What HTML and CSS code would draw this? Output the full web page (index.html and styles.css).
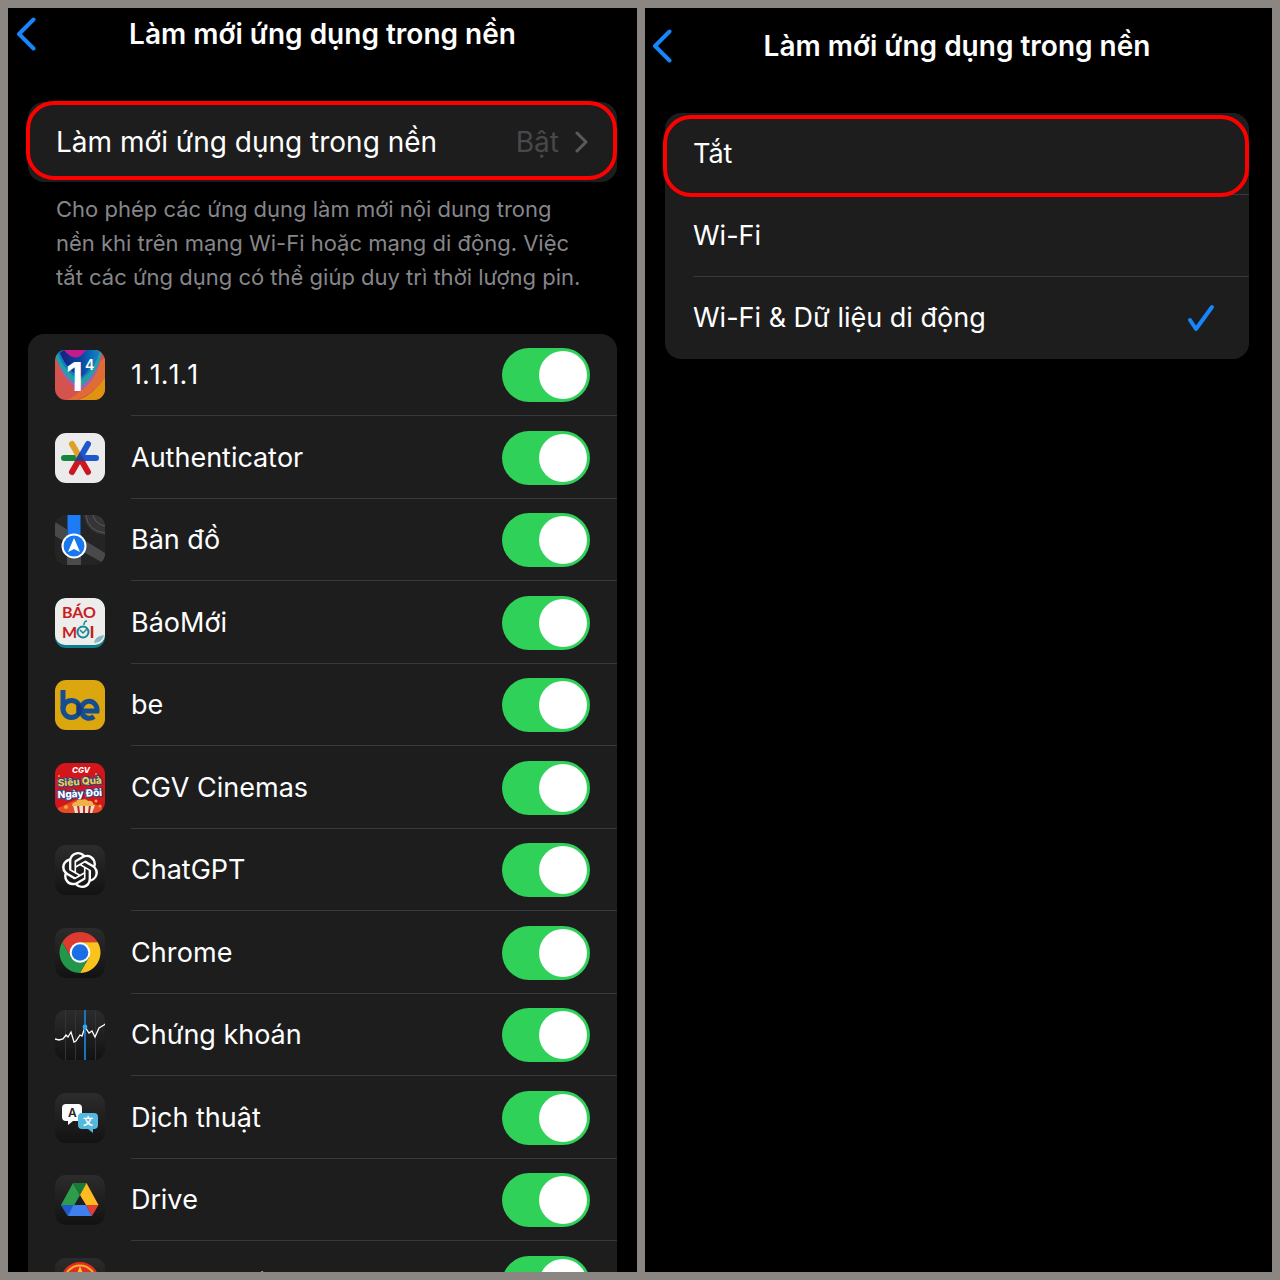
FILE: index.html
```html
<!DOCTYPE html>
<html lang="vi">
<head>
<meta charset="utf-8">
<meta name="viewport" content="width=device-width, initial-scale=1">
<title>Làm mới ứng dụng trong nền</title>
<link rel="stylesheet" href="styles.css">
</head>
<body>
<main class="screens">
  <section class="screen">
    <header class="navbar">
      <a class="back" href="#" aria-label="Quay lại"><svg width="20" height="34" viewBox="0 0 20 34"><path d="M17.500 2.500 3 17l14.500 14.500"/></svg></a>
      <h1 class="title">Làm mới ứng dụng trong nền</h1>
    </header>
    <a class="card setting" href="#">
      <span class="setting-name">Làm mới ứng dụng trong nền</span>
      <span class="setting-value">Bật</span>
      <svg class="chevron" width="14" height="22" viewBox="0 0 14 22"><path d="M2 2l9 9-9 9"/></svg>
      <span class="highlight"></span>
    </a>
    <p class="note">Cho phép các ứng dụng làm mới nội dung trong nền khi trên mạng Wi-Fi hoặc mạng di động. Việc tắt các ứng dụng có thể giúp duy trì thời lượng pin.</p>
    <ul class="card apps">
      <li><label class="app">
        <svg class="icon" viewBox="0 0 50 50">
          <defs><linearGradient id="warp" x1="0" y1="0" x2="1" y2="0"><stop offset="0" stop-color="#15207c"/><stop offset=".6" stop-color="#0b46a4"/><stop offset="1" stop-color="#087fc0"/></linearGradient></defs>
          <rect width="50" height="50" fill="#d5534f"/>
          <path d="M50 0v27Q38 45 24 50h26z" fill="#e0930f"/>
          <path d="M50 8v20Q40 42 22 50H12Q36 38 44 12z" fill="#df6b35"/>
          <path d="M0 5Q10 36 27 40 45 26 47 0H0z" fill="#9b62b4"/>
          <path d="M0 0v6Q10 30 26 36 43 24 47 0z" fill="#1ba3a5"/>
          <path d="M2 2Q12 26 26 30 40 20 45 0H2z" fill="#1679bd"/>
          <path d="M5 3Q13 22 26 27 37 20 41 0H8z" fill="url(#warp)"/>
          <path d="M9 0q12 15 22 0z" fill="#c41b8c"/>
          <text x="11" y="41" class="glyph" font-size="40" font-weight="700" fill="#fff">1</text>
          <text x="30" y="20" class="glyph" font-size="14" font-weight="600" fill="#fff">4</text>
        </svg>
        <span class="app-name">1.1.1.1</span><input class="switch" type="checkbox" checked></label></li>
      <li><label class="app">
        <svg class="icon" viewBox="0 0 50 50">
          <rect width="50" height="50" fill="#ebebeb"/>
          <g fill="none" stroke-width="6" stroke-linecap="round"><path d="M9 25h16" stroke="#16853a"/><path d="M17 11l8 14" stroke="#dda126"/><path d="M17 39l8-14 8 14" stroke="#cf1620"/><path d="M33 11l-8 14h16" stroke="#1d57d0"/></g>
          <path d="M25 20l5 8h-10z" fill="#29408f"/>
        </svg>
        <span class="app-name">Authenticator</span><input class="switch" type="checkbox" checked></label></li>
      <li><label class="app">
        <svg class="icon" viewBox="0 0 50 50">
          <rect width="50" height="50" fill="#242425"/>
          <path d="M0 7l50 31v11L0 21z" fill="#49494b"/>
          <path d="M29 0h21v20Q31 18 29 0z" fill="#353537"/>
          <path d="M31 0q2 16 19 18M38 0q2 9 12 11" stroke="#59595b" fill="none"/>
          <path d="M12 28h14v22H12z" fill="#4b4b4d"/>
          <path d="M13 0h12v25H13z" fill="#1b7cf5"/><path d="M12 0h1v25h-1zM25 0h1v25h-1z" fill="#175198"/>
          <circle cx="19" cy="31" r="12.500" fill="#fff"/><circle cx="19" cy="31" r="10.500" fill="#1a78ef"/>
          <path d="M19 23l6 14-6-3-6 3z" fill="#fff"/>
        </svg>
        <span class="app-name">Bản đồ</span><input class="switch" type="checkbox" checked></label></li>
      <li><label class="app">
        <svg class="icon" viewBox="0 0 50 50">
          <rect width="50" height="50" fill="#0f7d8c"/><rect width="50" height="47" rx="10" fill="#ededec"/>
          <text x="7" y="20" class="narrow" font-size="16" font-weight="700" fill="#c8201f">BÁO</text>
          <text x="7" y="40" class="narrow" font-size="16" font-weight="700" fill="#c8201f">M</text>
          <circle cx="28" cy="34" r="5.500" fill="none" stroke="#168796" stroke-width="2"/><path d="M25 32l3 3 4-4M29 27q0-4 3-4" fill="none" stroke="#168796" stroke-width="1.500"/>
          <path d="M37 28v12" stroke="#c8201f" stroke-width="2.500"/>
          <path d="M39 45q1-7 10-8-1 7-10 8z" fill="#86b9bd"/>
        </svg>
        <span class="app-name">BáoMới</span><input class="switch" type="checkbox" checked></label></li>
      <li><label class="app">
        <svg class="icon" viewBox="0 0 50 50">
          <rect width="50" height="50" fill="#dba60e"/>
          <g fill="none" stroke="#154c92" stroke-width="5"><path d="M8 10v19"/><circle cx="16.500" cy="29" r="8.500"/><path d="M27 31h15a8 8.500 0 1 0-3 5.500"/></g>
          <path d="M22 22q5 3 5 8t-4 6q-3-4-1-14z" fill="#123b78"/>
        </svg>
        <span class="app-name">be</span><input class="switch" type="checkbox" checked></label></li>
      <li><label class="app">
        <svg class="icon" viewBox="0 0 50 50">
          <rect width="50" height="50" fill="#d3161b"/>
          <path d="M25 35L3 45v5h44v-6z" fill="#e64b24"/>
          <text x="17" y="10" class="glyph" font-size="8" font-weight="800" font-style="italic" fill="#fff">CGV</text>
          <g class="glyph" font-weight="800" text-anchor="middle" stroke="#26478e" stroke-width="2" paint-order="stroke"><text x="25" y="22" font-size="10" fill="#f2cb47" transform="rotate(-4 25 22)">Siêu Quà</text><text x="25" y="34" font-size="10" fill="#fff" transform="rotate(-3 25 34)">Ngày Đôi</text></g>
          <path d="M18 42h22l-3 8H20z" fill="#f0ddd0"/><path d="M22 42l1 8h2l-1-8zM28 42v8h2v-8zM34 42l-1 8h2l1-8z" fill="#b72a20"/>
          <path d="M17 43q0-4 4-4 2-4 6-2 4-2 6 1 5-1 6 5z" fill="#efb347"/>
          <g fill="#f0a33c"><circle cx="11" cy="44" r="2"/><circle cx="41" cy="38" r="1.500"/><circle cx="45" cy="43" r="1.500"/><circle cx="4" cy="13" r="1"/><circle cx="41" cy="11" r="1"/></g>
        </svg>
        <span class="app-name">CGV Cinemas</span><input class="switch" type="checkbox" checked></label></li>
      <li><label class="app">
        <svg class="icon dark" viewBox="0 0 50 50">
          <path transform="translate(7 7) scale(1.500)" fill="#fff" d="M22.2819 9.8211a5.9847 5.9847 0 0 0-.5157-4.9108 6.0462 6.0462 0 0 0-6.5098-2.9A6.0651 6.0651 0 0 0 4.9807 4.1818a5.9847 5.9847 0 0 0-3.9977 2.9 6.0462 6.0462 0 0 0 .7427 7.0966 5.98 5.98 0 0 0 .511 4.9107 6.051 6.051 0 0 0 6.5146 2.9001A5.9847 5.9847 0 0 0 13.2599 24a6.0557 6.0557 0 0 0 5.7718-4.2058 5.9894 5.9894 0 0 0 3.9977-2.9001 6.0557 6.0557 0 0 0-.7475-7.0729zm-9.022 12.6081a4.4755 4.4755 0 0 1-2.8764-1.0408l.1419-.0804 4.7783-2.7582a.7948.7948 0 0 0 .3927-.6813v-6.7369l2.02 1.1686a.071.071 0 0 1 .038.052v5.5826a4.504 4.504 0 0 1-4.4945 4.4944zm-9.6607-4.1254a4.4708 4.4708 0 0 1-.5346-3.0137l.142.0852 4.783 2.7582a.7712.7712 0 0 0 .7806 0l5.8428-3.3685v2.3324a.0804.0804 0 0 1-.0332.0615L9.74 19.9502a4.4992 4.4992 0 0 1-6.1408-1.6464zM2.3408 7.8956a4.485 4.485 0 0 1 2.3655-1.9728V11.6a.7664.7664 0 0 0 .3879.6765l5.8144 3.3543-2.0201 1.1685a.0757.0757 0 0 1-.071 0l-4.8303-2.7865A4.504 4.504 0 0 1 2.3408 7.872zm16.5963 3.8558L13.1038 8.364 15.1192 7.2a.0757.0757 0 0 1 .071 0l4.8303 2.7913a4.4944 4.4944 0 0 1-.6765 8.1042v-5.6772a.79.79 0 0 0-.407-.667zm2.0107-3.0231l-.142-.0852-4.7735-2.7818a.7759.7759 0 0 0-.7854 0L9.409 9.2297V6.8974a.0662.0662 0 0 1 .0284-.0615l4.8303-2.7866a4.4992 4.4992 0 0 1 6.6802 4.66zM8.3065 12.863l-2.02-1.1638a.0804.0804 0 0 1-.038-.0567V6.0742a4.4992 4.4992 0 0 1 7.3757-3.4537l-.142.0805L8.704 5.459a.7948.7948 0 0 0-.3927.6813zm1.0976-2.3654l2.602-1.4998 2.6069 1.4998v2.9994l-2.5974 1.4997-2.6067-1.4997Z"/>
        </svg>
        <span class="app-name">ChatGPT</span><input class="switch" type="checkbox" checked></label></li>
      <li><label class="app">
        <svg class="icon dark" viewBox="0 0 50 50">
          <path d="M7.250 14.250A20.500 20.500 0 0 1 42.750 14.250H25L16.120 29.600z" fill="#df3a2f"/>
          <path d="M42.750 14.250A20.500 20.500 0 0 1 25 45l8.880-15.400L25 14.250z" fill="#fbc31d"/>
          <path d="M7.250 14.250A20.500 20.500 0 0 0 25 45l8.880-15.400H16.120z" fill="#23964a"/>
          <circle cx="25" cy="24.500" r="10.300" fill="#fff"/><circle cx="25" cy="24.500" r="8.300" fill="#1b6fe4"/>
        </svg>
        <span class="app-name">Chrome</span><input class="switch" type="checkbox" checked></label></li>
      <li><label class="app">
        <svg class="icon dark" viewBox="0 0 50 50">
          <path d="M10.500 0v50M20.500 0v50M40.500 0v50" stroke="#343436"/>
          <path d="M0 29l4 1 4-1 3-4 2 2 3-5 3 10 2-1 4-6 2 1 3-9 4 6 3-2 3 6 4-9 5-3 1-1" fill="none" stroke="#fff" stroke-width="1.300"/>
          <path d="M30 0v50" stroke="#1974c0" stroke-width="2"/><circle cx="30" cy="17" r="2.400" fill="#32a8f0"/>
        </svg>
        <span class="app-name">Chứng khoán</span><input class="switch" type="checkbox" checked></label></li>
      <li><label class="app">
        <svg class="icon dark" viewBox="0 0 50 50">
          <path d="M11 11h12q4 0 4 4v9q0 4-4 4h-5l-5 4v-4h-2q-4 0-4-4v-9q0-4 4-4z" fill="#fff"/>
          <path d="M27 20h12q4 0 4 4v8q0 4-4 4h-1v4l-5-4h-6q-4 0-4-4v-8q0-4 4-4z" fill="#55b8df"/>
          <text x="13" y="24" class="glyph" font-size="12" font-weight="600" fill="#252525">A</text>
          <text x="28" y="32" class="cjk" font-size="10" font-weight="700" fill="#fff">文</text>
        </svg>
        <span class="app-name">Dịch thuật</span><input class="switch" type="checkbox" checked></label></li>
      <li><label class="app">
        <svg class="icon dark" viewBox="0 0 50 50">
          <path d="M18 8L6 30l7 11 12-21z" fill="#2d9d4c"/><path d="M18 8h13.500L25 20z" fill="#197936"/>
          <path d="M31.500 8L25 20l6 10h12.500z" fill="#fcbb21"/>
          <path d="M6 30h12.500L13 41z" fill="#2059cf"/><path d="M18.500 30H31l6 11H13z" fill="#3f80ee"/><path d="M31 30h12.500L37 41z" fill="#e73c32"/>
        </svg>
        <span class="app-name">Drive</span><input class="switch" type="checkbox" checked></label></li>
      <li><label class="app">
        <svg class="icon dark" viewBox="0 0 50 50">
          <circle cx="25" cy="23" r="19" fill="#e42c20"/><circle cx="25" cy="23" r="15.500" fill="none" stroke="#f1b22c" stroke-width="2"/>
          <path d="M25 8l4 10h10l-8 6 3 10-9-6-9 6 3-10-8-6h10z" fill="#f5c52b"/>
        </svg>
        <span class="app-name">eTax Mobile</span><input class="switch" type="checkbox" checked></label></li>
    </ul>
  </section>

  <section class="screen screen-options">
    <header class="navbar">
      <a class="back" href="#" aria-label="Quay lại"><svg width="20" height="34" viewBox="0 0 20 34"><path d="M17.500 2.500 3 17l14.500 14.500"/></svg></a>
      <h2 class="title">Làm mới ứng dụng trong nền</h2>
    </header>
    <div class="card options" role="radiogroup" aria-label="Làm mới ứng dụng trong nền">
      <label class="option"><input class="radio" type="radio" name="refresh"><span class="option-name">Tắt</span><svg class="tick" width="28" height="28" viewBox="0 0 28 28"><path d="M3 16l6 9L25 3"/></svg><span class="highlight"></span></label>
      <label class="option"><input class="radio" type="radio" name="refresh"><span class="option-name">Wi-Fi</span><svg class="tick" width="28" height="28" viewBox="0 0 28 28"><path d="M3 16l6 9L25 3"/></svg></label>
      <label class="option"><input class="radio" type="radio" name="refresh" checked><span class="option-name">Wi-Fi &amp; Dữ liệu di động</span><svg class="tick" width="28" height="28" viewBox="0 0 28 28"><path d="M3 16l6 9L25 3"/></svg></label>
    </div>
  </section>
</main>
</body>
</html>
```
FILE: styles.css
```css
* { box-sizing: border-box; }

body {
  margin: 0;
  background: #8b8681;
  color: #fff;
  font: 400 27px/36px Inter, "Noto Sans", sans-serif;
}

.screens {
  display: grid;
  grid-template-columns: 629fr 627fr;
  gap: 8px;
  height: 100vh;
  padding: 8px;
}

.screen {
  min-width: 0;
  overflow: hidden;
  padding: 0 20px;
  background: #000;
}

.screen-options { padding: 12px 23px 0 20px; }

.navbar {
  display: grid;
  grid-template-columns: 20px 1fr 20px;
  align-items: center;
  height: 52px;
  margin: 0 -12px;
}

.screen-options .navbar { margin: 0 -13px; }

.back { display: flex; }
.back path, .tick path {
  fill: none;
  stroke: #1686fa;
  stroke-width: 4;
  stroke-linecap: round;
  stroke-linejoin: round;
}

.title {
  margin: 0;
  font-size: 28px;
  font-weight: 600;
  line-height: 36px;
  text-align: center;
}

.card {
  border-radius: 16px;
  background: #1d1d1e;
}

.setting {
  position: relative;
  display: flex;
  align-items: center;
  height: 80px;
  margin-top: 42px;
  padding: 0 28px;
  color: inherit;
  font-size: 28px;
  text-decoration: none;
}

.setting-name { flex: 1; }
.setting-value { color: #48484a; }
.chevron { margin-left: 16px; }
.chevron path {
  fill: none;
  stroke: #5a5a5e;
  stroke-width: 3;
  stroke-linecap: round;
  stroke-linejoin: round;
}

.highlight {
  position: absolute;
  inset: -1px 0 2px -2px;
  border: 4px solid #f00;
  border-radius: 28px;
  pointer-events: none;
}

.note {
  margin: 10px 28px 40px;
  color: #86868a;
  font-size: 22px;
  line-height: 34px;
}

.apps {
  margin: 0;
  padding: 0;
  list-style: none;
}

.app {
  position: relative;
  display: flex;
  align-items: center;
  height: 82px;
  padding-left: 27px;
}

.apps li:nth-child(even) .app { height: 83px; }

.icon {
  flex: none;
  width: 50px;
  height: 50px;
  margin-right: 26px;
  border-radius: 11px;
}

.dark { background: linear-gradient(#2c2c2d, #121213); }

.app-name {
  flex: 1;
  font-kerning: none;
}

.app::after, .option:not(:last-child)::after {
  content: "";
  position: absolute;
  right: 0;
  bottom: 0;
  left: 103px;
  height: 1px;
  background: #39393c;
}

.switch {
  appearance: none;
  display: flex;
  justify-content: flex-end;
  width: 88px;
  height: 54px;
  margin: 0 27px 0 0;
  padding: 3px;
  border-radius: 27px;
  background: #39393d;
}

.switch:checked { background: #2fd158; }
.switch::before {
  content: "";
  width: 48px;
  height: 48px;
  border-radius: 50%;
  background: #fff;
}
.switch:not(:checked) { justify-content: flex-start; }

.options { margin-top: 41px; }

.option {
  position: relative;
  display: flex;
  align-items: center;
  height: 82px;
  padding: 0 34px 0 28px;
}

.option:not(:last-child)::after { left: 28px; }
.option .highlight { inset: 2px 0 -2px -2px; z-index: 1; }
.option-name { flex: 1; }

.radio {
  appearance: none;
  width: 0;
  height: 0;
  margin: 0;
}

.tick { visibility: hidden; }
.radio:checked ~ .tick { visibility: visible; }

.glyph { font-family: Inter, "Noto Sans", sans-serif; }
.narrow { font-family: Lato, "Noto Sans", sans-serif; }
.cjk { font-family: "Noto Sans CJK SC", sans-serif; }
```
